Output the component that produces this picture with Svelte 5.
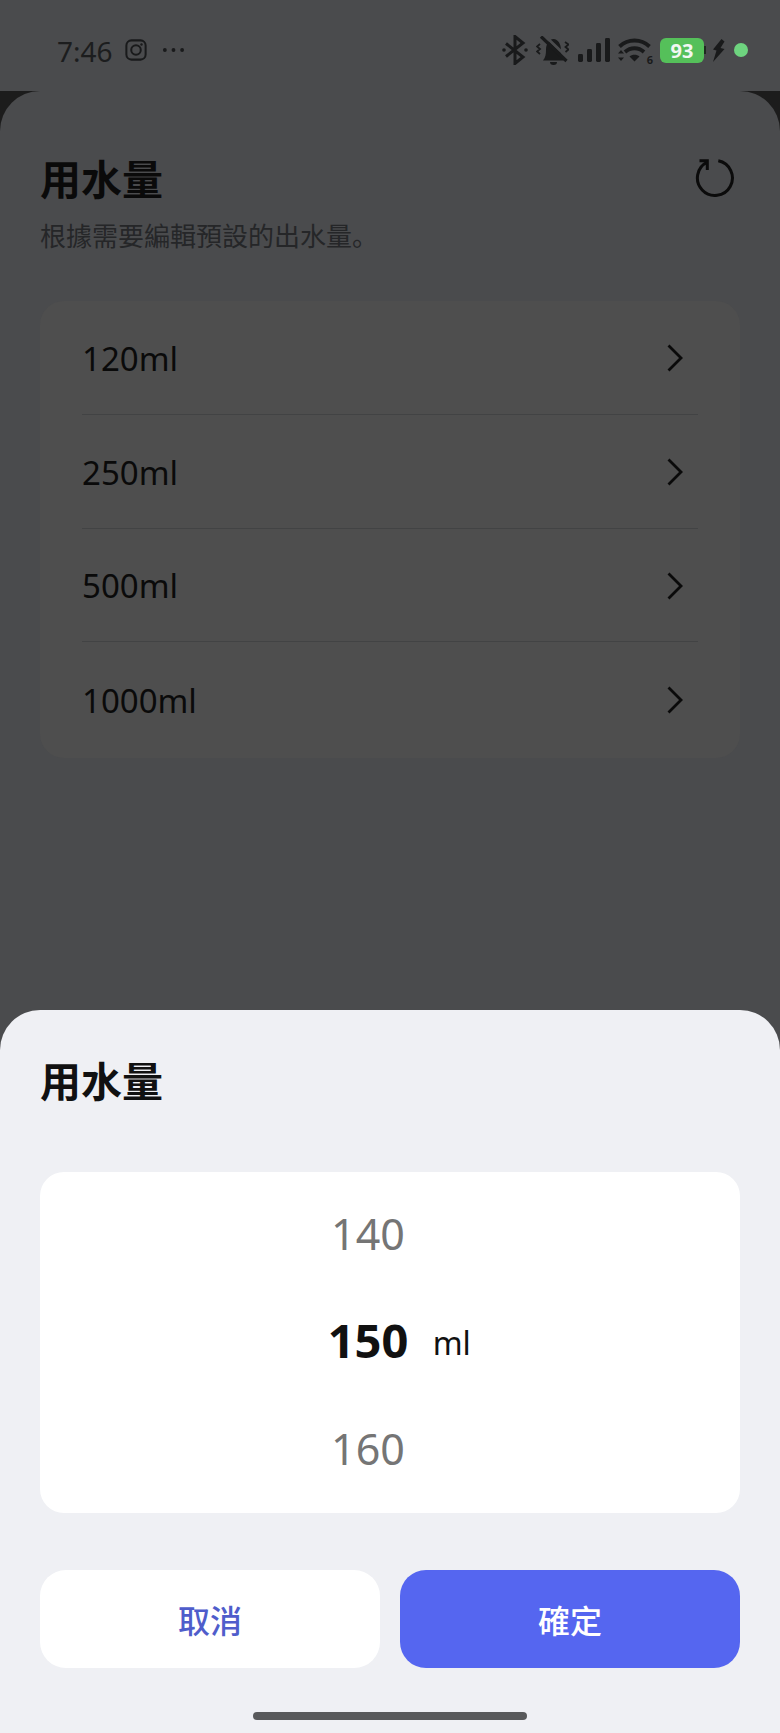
<script lang="ts">
	const amounts = ['120ml', '250ml', '500ml', '1000ml'];
</script>

<div class="screen">
	<header class="status">
		<div class="status-left">
			<span class="time">7:46</span>
			<svg class="ig" viewBox="0 0 24 24" fill="none" stroke="#191a1b" stroke-width="2.2">
				<rect x="1.500" y="1.500" width="21" height="21" rx="5.500" />
				<circle cx="12" cy="12" r="5.200" />
				<circle cx="18" cy="6" r="1.300" fill="#191a1b" stroke="none" />
			</svg>
			<svg class="dots" viewBox="0 0 24 6" fill="#191a1b">
				<circle cx="3" cy="3" r="2" /><circle cx="12" cy="3" r="2" /><circle cx="21" cy="3" r="2" />
			</svg>
		</div>
		<div class="status-right">
			<svg class="bt" viewBox="0 0 26 30" fill="none" stroke="#191a1b" stroke-width="3">
				<path d="M4 8.500 21 22 13 28.500V1.500L21 8 4 21.500" />
				<circle cx="2" cy="15" r="1.800" fill="#191a1b" stroke="none" />
				<circle cx="24" cy="15" r="1.800" fill="#191a1b" stroke="none" />
			</svg>
			<svg class="bell" viewBox="0 0 33 29" fill="none" stroke="#191a1b">
				<path d="M7 24.500c2.500-3 3-6 3-10.500C10 8 13 3 17.500 3S25 8 25 14c0 4.500.5 7.500 3 10.500z" fill="#191a1b" stroke="none" />
				<path d="M14 26h7a3.500 3 0 0 1-7 0z" fill="#191a1b" stroke="none" />
				<path d="M9 0 33 23" stroke="#4a4b4d" stroke-width="3" />
				<path d="M5 .5 30.500 25" stroke-width="3.200" />
				<path d="M4 8 1 10.500l3 2.500-3 2.500 3 2.500M29 6l3.500 2.500-3 2.500 3 2.500-3 2.500" stroke-width="1.800" />
			</svg>
			<svg class="signal" viewBox="0 0 32 24" fill="#191a1b">
				<rect x="0" y="16" width="5" height="8" rx="1.400" />
				<rect x="9" y="11" width="5" height="13" rx="1.400" />
				<rect x="18" y="5" width="5" height="19" rx="1.400" />
				<rect x="27" y="0" width="5" height="24" rx="1.400" />
			</svg>
			<div class="wifi">
				<svg viewBox="0 0 33 26" fill="none" stroke="#191a1b" stroke-width="3.800">
					<path d="M1.500 9.500C10 1.500 23 1.500 31.500 9.500" />
					<path d="M7 15c5.500-5 13.500-5 19 0" />
					<path d="M11.500 19.500 16.500 24.500 21.500 19.500c-2.500-2.400-7.500-2.400-10 0z" fill="#191a1b" stroke="none" />
					<path d="M0 16.500 3 13l3 3.500zM0 20.500h6L3 24z" fill="#191a1b" stroke="none" />
				</svg>
				<span class="wifi-num">6</span>
			</div>
			<div class="battery">93</div>
			<svg class="bolt" viewBox="0 0 13 23" fill="#191a1b">
				<path d="M9.500 0 1 10.500 4.500 11.500 1 23 12.500 10 8.500 9 12.500 2.500z" />
			</svg>
			<span class="dot"></span>
		</div>
	</header>

	<main class="page">
		<div class="page-head">
			<div>
				<h1>用水量</h1>
				<p>根據需要編輯預設的出水量。</p>
			</div>
			<svg class="refresh" viewBox="0 0 40 40" fill="none" stroke="#0b0b0b" stroke-width="3">
				<path d="M23.300 2.800A17.500 17.500 0 1 1 12.300 4.200" />
				<path d="M4.500 2.800H12.300V12" />
			</svg>
		</div>

		<ul class="list">
			{#each amounts as amount}
				<li class="row">
					<span>{amount}</span>
					<svg class="chevron" viewBox="0 0 16 28" fill="none" stroke="#0a0a0a" stroke-width="2.800">
						<path d="M1.500 1.500 14 14 1.500 26.500" />
					</svg>
				</li>
			{/each}
		</ul>
	</main>

	<section class="sheet">
		<h2>用水量</h2>
		<div class="picker">
			<div class="picker-col">
				<span class="num">140</span>
				<span class="num current">150<em>ml</em></span>
				<span class="num">160</span>
			</div>
		</div>
		<div class="actions">
			<button class="btn cancel">取消</button>
			<button class="btn confirm">確定</button>
		</div>
		<div class="home-bar"></div>
	</section>
</div>

<style>
	:global(body) {
		margin: 0;
		background: #1c1c1c;
	}

	.screen {
		position: relative;
		width: 780px;
		height: 1733px;
		overflow: hidden;
		background: #1c1c1c;
		font-family: 'Noto Sans', 'Noto Sans CJK SC', sans-serif;
	}

	.status {
		height: 91px;
		box-sizing: border-box;
		padding: 35px 32px 0 57px;
		display: flex;
		justify-content: space-between;
		align-items: flex-start;
		background: #4a4b4d;
	}

	.status-left {
		display: flex;
		align-items: center;
		gap: 12px;
		height: 30px;
	}

	.time {
		font-size: 28px;
		color: #1c1d1e;
		line-height: 32px;
		margin-top: 2px;
	}

	.ig {
		width: 22px;
		height: 22px;
	}

	.dots {
		width: 23px;
		height: 6px;
		margin-left: 3px;
	}

	.status-right {
		display: flex;
		align-items: center;
		height: 30px;
	}

	.bt {
		width: 26px;
		height: 30px;
	}

	.bell {
		width: 33px;
		height: 29px;
		margin-left: 8px;
	}

	.signal {
		width: 32px;
		height: 24px;
		margin-left: 9px;
	}

	.wifi {
		position: relative;
		width: 33px;
		height: 26px;
		margin-left: 8px;
	}

	.wifi svg {
		width: 33px;
		height: 26px;
		display: block;
	}

	.wifi-num {
		position: absolute;
		right: -2px;
		bottom: -2px;
		font-size: 11px;
		line-height: 11px;
		font-weight: 700;
		color: #191a1b;
	}

	.battery {
		position: relative;
		width: 44px;
		height: 25px;
		margin-left: 9px;
		border-radius: 6px;
		background: #55c05a;
		color: #f2f7f2;
		font-size: 20px;
		font-weight: 700;
		line-height: 25px;
		text-align: center;
	}

	.battery::after {
		content: '';
		position: absolute;
		right: -2px;
		top: 8px;
		width: 2px;
		height: 8px;
		background: #1f2a20;
	}

	.bolt {
		width: 13px;
		height: 23px;
		margin-left: 8px;
	}

	.dot {
		width: 14px;
		height: 14px;
		margin-left: 9px;
		border-radius: 50%;
		background: #6ed47f;
	}

	.page {
		height: 1642px;
		box-sizing: border-box;
		padding: 63px 40px 0;
		border-radius: 40px 40px 0 0;
		background: #4a4b4d;
	}

	.page-head {
		display: flex;
		justify-content: space-between;
		align-items: flex-start;
	}

	h1,
	h2 {
		margin: 0;
		font-size: 41px;
		line-height: 50px;
		font-weight: 700;
	}

	h1 {
		color: #0a0a0a;
	}

	.page-head p {
		margin: 14px 0 0;
		font-size: 26px;
		line-height: 36px;
		color: #252628;
	}

	.refresh {
		width: 40px;
		height: 40px;
		margin: 4px 5px 0 0;
	}

	.list {
		list-style: none;
		margin: 47px 0 0;
		padding: 0 42px;
		height: 457px;
		box-sizing: border-box;
		border-radius: 24px;
		background: #4e4e4e;
	}

	.row {
		height: 113.750px;
		box-sizing: border-box;
		display: flex;
		justify-content: space-between;
		align-items: center;
		padding: 2px 15px 0 0;
		font-size: 33px;
		color: #0a0a0a;
		border-bottom: 1px solid #424344;
	}

	.row:last-child {
		border-bottom: 0;
	}

	.chevron {
		width: 16px;
		height: 28px;
	}

	.sheet {
		position: absolute;
		left: 0;
		right: 0;
		bottom: 0;
		height: 723px;
		box-sizing: border-box;
		padding: 46px 40px 0;
		border-radius: 40px 40px 0 0;
		background: #eff0f4;
		display: flex;
		flex-direction: column;
	}

	h2 {
		color: #111;
	}

	.picker {
		margin-top: 66px;
		height: 341px;
		border-radius: 24px;
		background: #fff;
		display: flex;
		justify-content: center;
	}

	.picker-col {
		width: 80px;
		margin-left: -44px;
		display: flex;
		flex-direction: column;
		align-items: center;
		padding-top: 33px;
	}

	.num {
		position: relative;
		flex: none;
		height: 107.500px;
		font-size: 43px;
		line-height: 58px;
		color: #757575;
	}

	.current {
		font-size: 47px;
		line-height: 54px;
		font-weight: 700;
		color: #111;
	}

	.current em {
		position: absolute;
		left: 105px;
		top: 3px;
		font-size: 32px;
		font-style: normal;
		font-weight: 400;
	}

	.actions {
		margin-top: 57px;
		display: flex;
		gap: 20px;
	}

	.btn {
		flex: 1;
		height: 98px;
		border: 0;
		border-radius: 26px;
		font-family: inherit;
		font-size: 32px;
		font-weight: 500;
	}

	.cancel {
		background: #fff;
		color: #4f5dcb;
	}

	.confirm {
		background: #5566f0;
		color: #fff;
	}

	.home-bar {
		width: 274px;
		height: 8px;
		margin: 44px auto 0;
		border-radius: 4px;
		background: #58595b;
	}
</style>
